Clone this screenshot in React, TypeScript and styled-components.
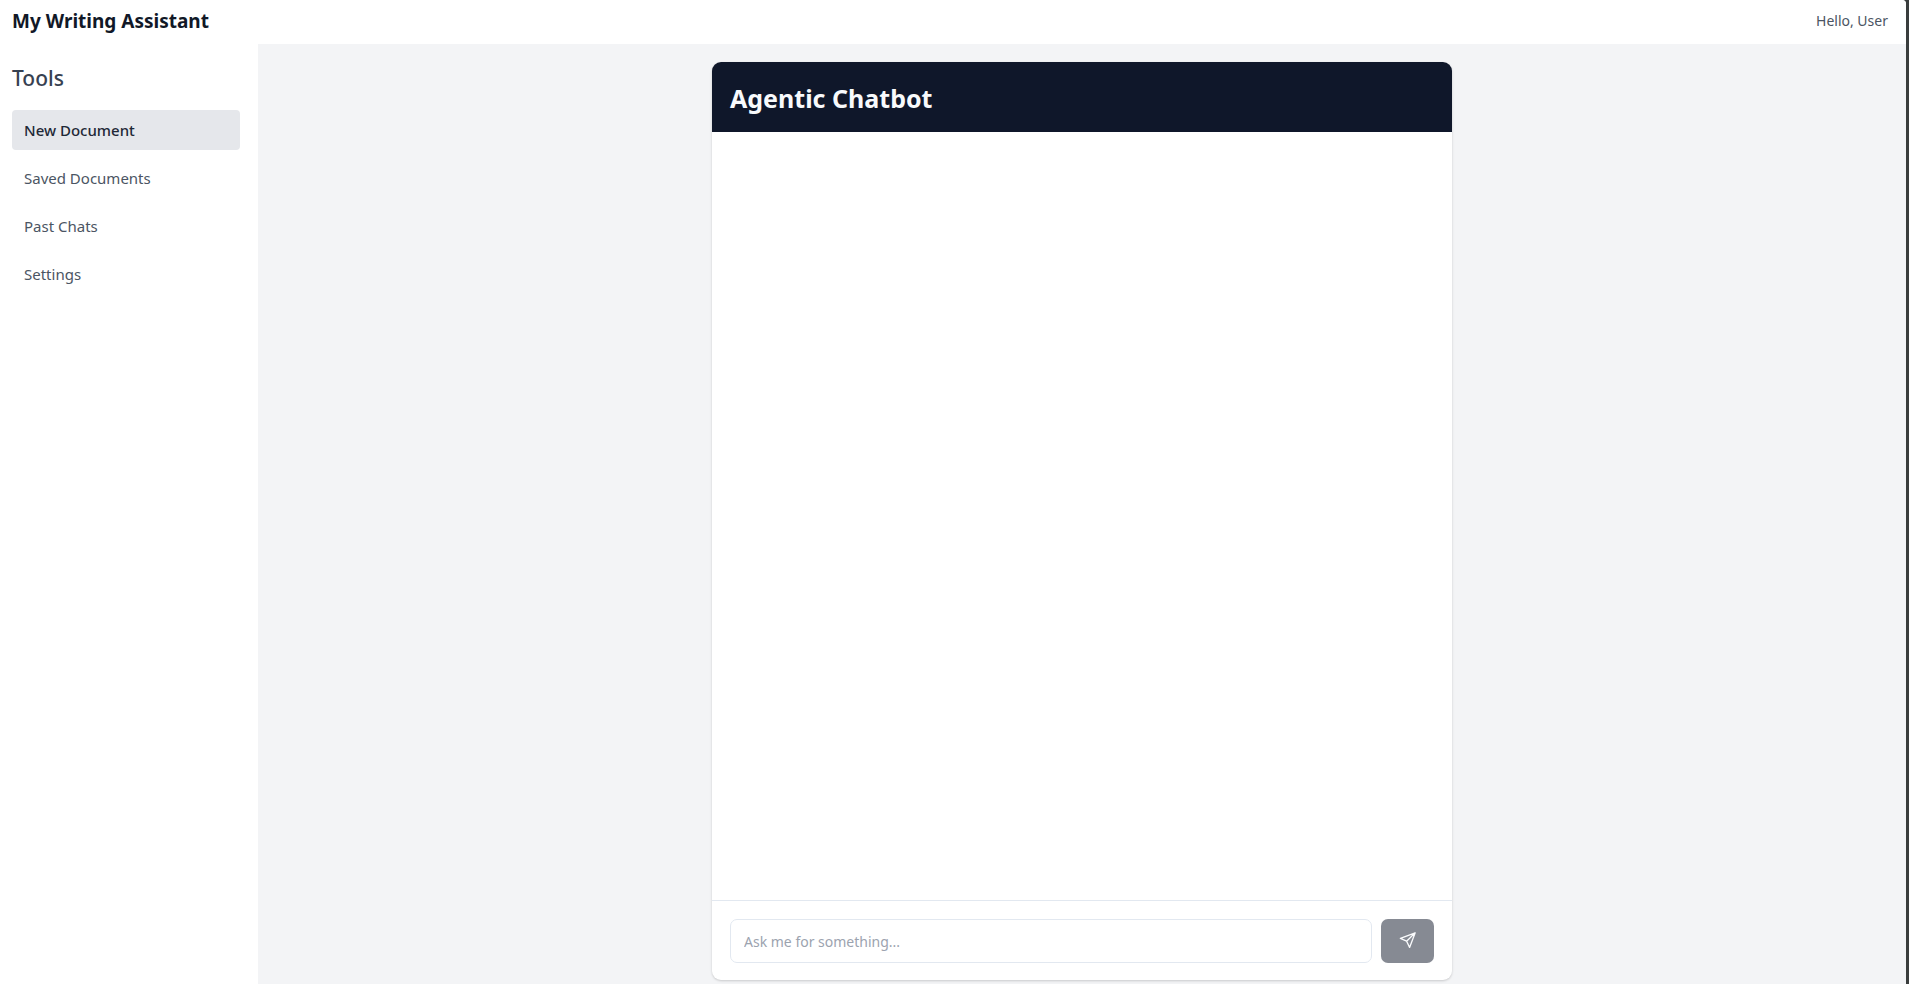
import React, { useState } from 'react';
import styled, { createGlobalStyle } from 'styled-components';

const GlobalStyle = createGlobalStyle`
  *, *::before, *::after { box-sizing: border-box; }
  body {
    margin: 0;
    background: #3a3d3d;
    font-family: 'Segoe UI', 'Noto Sans', 'Open Sans', sans-serif;
    color: #111827;
  }
  button, input { font: inherit; }
  h1, h2 { margin: 0; }
`;

const Page = styled.div`
  display: flex;
  flex-direction: column;
  height: 100vh;
  margin-right: 3px;
  background: #f3f4f6;
  border-top-right-radius: 4px;
  overflow: hidden;
`;

const TopBar = styled.header`
  display: flex;
  align-items: center;
  justify-content: space-between;
  height: 44px;
  padding: 0 18px 3px 12px;
  background: #fff;
`;

const Brand = styled.h1`
  font-size: 19px;
  line-height: 28px;
  font-weight: 700;
`;

const Greeting = styled.span`
  font-size: 14px;
  line-height: 24px;
  color: #4b5563;
`;

const Body = styled.div`
  display: flex;
  flex: 1;
  min-height: 0;
`;

const Sidebar = styled.aside`
  flex: none;
  width: 258px;
  padding: 18px 18px 18px 12px;
  background: #fff;
`;

const SidebarTitle = styled.h2`
  margin-bottom: 16px;
  font-size: 21px;
  line-height: 32px;
  font-weight: 500;
  color: #374151;
`;

const Nav = styled.nav`
  display: flex;
  flex-direction: column;
  gap: 8px;
`;

const NavButton = styled.button<{ $active: boolean }>`
  height: 40px;
  padding: 0 12px;
  border: 0;
  border-radius: 4px;
  background: ${p => (p.$active ? '#e5e7eb' : 'transparent')};
  color: ${p => (p.$active ? '#1f2937' : '#4b5563')};
  font-size: 15px;
  font-weight: ${p => (p.$active ? 500 : 400)};
  text-align: left;
  cursor: pointer;
`;

const Main = styled.main`
  display: flex;
  flex: 1;
  justify-content: center;
  min-width: 0;
  padding: 18px 18px 4px;
`;

const Card = styled.section`
  display: flex;
  flex-direction: column;
  width: 100%;
  max-width: 740px;
  border-radius: 9px;
  background: #fff;
  box-shadow: 0 1px 3px rgba(0, 0, 0, 0.1), 0 1px 2px rgba(0, 0, 0, 0.08);
  overflow: hidden;
`;

const CardHeader = styled.header`
  padding: 19px 18px 17px;
  background: #0f172a;
  color: #f8fafc;
`;

const CardTitle = styled.h2`
  font-size: 25px;
  line-height: 34px;
  font-weight: 700;
`;

const Messages = styled.div`
  flex: 1;
  overflow-y: auto;
`;

const Composer = styled.form`
  display: flex;
  gap: 9px;
  padding: 18px 18px 17px;
  border-top: 1px solid #e2e8f0;
`;

const MessageInput = styled.input`
  flex: 1;
  min-width: 0;
  height: 44px;
  padding: 0 13px;
  border: 1px solid #e2e8f0;
  border-radius: 7px;
  background: #fff;
  font-size: 14px;
  color: #0f172a;
  &::placeholder { color: #9ca3af; opacity: 1; }
`;

const SendButton = styled.button`
  display: flex;
  align-items: center;
  justify-content: center;
  width: 53px;
  height: 44px;
  padding: 0 0 2px;
  border: 0;
  border-radius: 7px;
  background: #0f172a;
  color: #f8fafc;
  &:disabled { opacity: 0.5; }
`;

const SendIcon = () => (
  <svg width="18" height="18" viewBox="0 0 18 18" fill="none" aria-hidden="true">
    <path
      d="M16.2 1.8L1.4 7.4L7.6 10.2L10.6 16.4L16.2 1.8ZM16.2 1.8L7.6 10.2"
      stroke="currentColor"
      strokeWidth="1.3"
      strokeLinejoin="round"
    />
  </svg>
);

const TOOLS = ['New Document', 'Saved Documents', 'Past Chats', 'Settings'];

export default function App() {
  const [tool, setTool] = useState(TOOLS[0]);
  const [message, setMessage] = useState('');

  return (
    <>
      <GlobalStyle />
      <Page>
        <TopBar>
          <Brand>My Writing Assistant</Brand>
          <Greeting>Hello, User</Greeting>
        </TopBar>
        <Body>
          <Sidebar>
            <SidebarTitle>Tools</SidebarTitle>
            <Nav aria-label="Tools">
              {TOOLS.map(name => (
                <NavButton key={name} type="button" $active={name === tool} onClick={() => setTool(name)}>
                  {name}
                </NavButton>
              ))}
            </Nav>
          </Sidebar>
          <Main>
            <Card>
              <CardHeader>
                <CardTitle>Agentic Chatbot</CardTitle>
              </CardHeader>
              <Messages />
              <Composer onSubmit={e => e.preventDefault()}>
                <MessageInput
                  aria-label="Message"
                  placeholder="Ask me for something..."
                  value={message}
                  onChange={e => setMessage(e.target.value)}
                />
                <SendButton type="submit" aria-label="Send" disabled={!message}>
                  <SendIcon />
                </SendButton>
              </Composer>
            </Card>
          </Main>
        </Body>
      </Page>
    </>
  );
}
